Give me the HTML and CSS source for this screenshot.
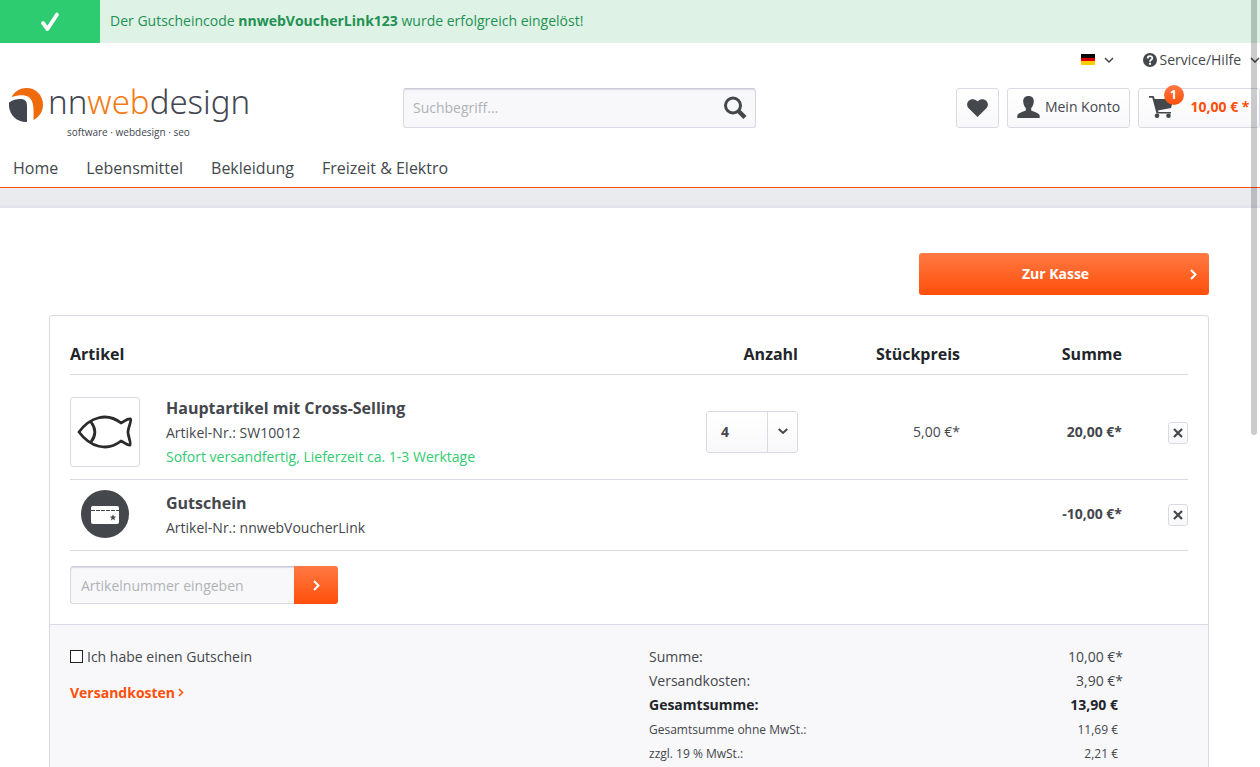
FILE: index.html
```html
<!DOCTYPE html>
<html lang="de">
<head>
<meta charset="utf-8">
<title>Warenkorb | nnwebdesign</title>
<link rel="stylesheet" href="styles.css">
</head>
<body>
<div class="alert" role="status">
  <div class="alert-icon"><svg width="22" height="22" viewBox="0 0 22 22"><path d="M4 12l4.500 6L18 3.500" fill="none" stroke="#fff" stroke-width="3.800" stroke-linecap="round" stroke-linejoin="round"/></svg></div>
  <p class="alert-text">Der Gutscheincode <strong>nnwebVoucherLink123</strong> wurde erfolgreich eingelöst!</p>
</div>
<header class="header">
  <div class="topbar">
    <button class="top-item" type="button" aria-label="Sprache">
      <svg width="14" height="11" viewBox="0 0 14 11"><path fill="#000" d="M0 0h14v4H0z"/><path fill="#d00" d="M0 4h14v3H0z"/><path fill="#fc0" d="M0 7h14v4H0z"/></svg>
      <svg class="chev" width="10" height="6" viewBox="0 0 10 6"><path d="M1 1l4 4 4-4" fill="none" stroke="currentColor" stroke-width="1.500"/></svg>
    </button>
    <button class="top-item service" type="button">
      <svg width="14" height="14" viewBox="0 0 14 14"><circle cx="7" cy="7" r="7" fill="currentColor"/><path d="M4.700 5.400C4.700 2.200 9.400 2.400 9.300 5.200 9.200 6.900 7 6.800 7 8.700" fill="none" stroke="#fff" stroke-width="1.800"/><path d="M6 9.800h2v1.900H6z" fill="#fff"/></svg>
      <span>Service/Hilfe</span>
      <svg class="chev" width="10" height="6" viewBox="0 0 10 6"><path d="M1 1l4 4 4-4" fill="none" stroke="currentColor" stroke-width="1.500"/></svg>
    </button>
  </div>
  <div class="main-row">
    <a class="logo" href="#">
      <svg width="35" height="35" viewBox="0 0 35 35"><path d="M2.500 9C6 3 11.500 0 17.500 0 27 0 34 7.500 34 16.500c0 7-3.600 12.500-9.500 15.500C25.500 12 23 3.500 2.500 9z" fill="#ee6a0a"/><path d="M0 14.500C3 12 7.500 11 11.500 11c4.500 0 6.500 2.500 6.500 7v16C7 34.500-1 26 0 14.500z" fill="#42464f"/></svg>
      <span class="logo-words"><span class="logo-name">nn<span class="logo-accent">web</span>design</span><span class="logo-sub">software · webdesign · seo</span></span>
    </a>
    <form class="search">
      <input class="search-input" type="search" aria-label="Suchbegriff" placeholder="Suchbegriff...">
      <button class="search-btn" type="button" aria-label="Suchen"><svg width="24" height="24" viewBox="0 0 24 24"><circle cx="10" cy="9.500" r="7.500" fill="none" stroke="currentColor" stroke-width="3"/><path d="M15.500 15l6.500 6.500" stroke="currentColor" stroke-width="4.500"/></svg></button>
    </form>
    <div class="shop-actions">
      <button class="btn heart" type="button" aria-label="Merkzettel"><svg width="21" height="18" viewBox="0 0 21 18"><path d="M10.500 18L1.600 9.300C-3 4 4-3.500 10.500 2.300 17-3.500 24 4 19.400 9.300z" fill="currentColor"/></svg></button>
      <button class="btn account" type="button"><svg width="23" height="22" viewBox="0 0 23 22"><path d="M11.500 0C15 0 17 2.200 16.800 5.500c-.2 3.500-1.500 5.500-2.600 6.500v2.500c3 1.500 8.300 2.500 8.500 5.200V22H.3v-2.300C.5 17 5.800 16 8.800 14.500V12C7.700 11 6.400 9 6.200 5.500 6 2.200 8 0 11.500 0z" fill="currentColor"/></svg><span>Mein Konto</span></button>
      <button class="btn cart" type="button">
        <span class="cart-icon"><svg width="26" height="22" viewBox="0 0 26 22"><path d="M0 0h4.500l1.300 3H24.500L22 12 9 14.500l.4 1.500H22v1.500H7.500L3.300 1.800H0z" fill="currentColor"/><circle cx="8" cy="19.700" r="2.300" fill="currentColor"/><circle cx="19.500" cy="19.700" r="2.300" fill="currentColor"/></svg><span class="badge">1</span></span>
        <span class="cart-sum">10,00 € *</span>
      </button>
    </div>
  </div>
  <nav class="nav"><a href="#">Home</a><a href="#">Lebensmittel</a><a href="#">Bekleidung</a><a href="#">Freizeit &amp; Elektro</a></nav>
</header>
<div class="band"></div>
<main class="content">
  <div class="actions"><button class="checkout" type="button"><span>Zur Kasse</span><svg width="7" height="11" viewBox="0 0 7 11"><path d="M1 1l4.500 4.500L1 10" fill="none" stroke="#fff" stroke-width="2"/></svg></button></div>
  <section class="panel">
    <div class="basket">
      <table class="items">
        <colgroup><col><col class="c-qty"><col class="c-price"><col class="c-sum"><col class="c-del"></colgroup>
        <thead><tr><th class="left" scope="col">Artikel</th><th scope="col">Anzahl</th><th scope="col">Stückpreis</th><th scope="col">Summe</th><td></td></tr></thead>
        <tbody>
          <tr class="row-article">
            <td class="left"><div class="product">
              <a class="thumb" href="#" aria-label="Hauptartikel mit Cross-Selling"><svg width="56" height="34" viewBox="0 0 56 34"><g fill="none" stroke="#2b2b2b" stroke-width="2.800" stroke-linejoin="round" stroke-linecap="round"><path d="M2 17C13 2 30-3 44 8c3.500-1.500 6-4.500 9.500-4 1.500 1-2.500 9-2.500 13s3.500 12 2 13c-3.500.5-5.500-2.500-9-4C30 37 13 32 2 17z"/><path d="M14 7c5 6.500 5 13.500 0 20"/></g></svg></a>
              <div><a class="name" href="#">Hauptartikel mit Cross-Selling</a><p class="line">Artikel-Nr.: SW10012</p><p class="line stock">Sofort versandfertig, Lieferzeit ca. 1-3 Werktage</p></div>
            </div></td>
            <td><div class="qty"><select aria-label="Anzahl"><option>4</option></select><svg width="10" height="7" viewBox="0 0 10 7"><path d="M0.700 1l4.300 4L9.300 1" fill="none" stroke="currentColor" stroke-width="2"/></svg></div></td>
            <td class="num">5,00 €*</td><td class="num bold">20,00 €*</td>
            <td><button class="delete" type="button" aria-label="Löschen"><svg width="10" height="10" viewBox="0 0 10 10"><path d="M1 1l8 8m0-8l-8 8" stroke="currentColor" stroke-width="2.200"/></svg></button></td>
          </tr>
          <tr class="row-voucher">
            <td class="left"><div class="product">
              <span class="voucher-icon"><svg width="48" height="48" viewBox="0 0 48 48"><circle cx="24" cy="24" r="24" fill="#44474c"/><rect x="10" y="16" width="28" height="18" rx="2" fill="#fff"/><path d="M10 20.500h28" stroke="#44474c" stroke-dasharray="4 1"/><path d="M32 24.200l.9 2.200 2.300.2-1.800 1.500.6 2.300-2-1.300-2 1.300.6-2.300-1.800-1.500 2.300-.2z" fill="#44474c"/></svg></span>
              <div><span class="name">Gutschein</span><p class="line">Artikel-Nr.: nnwebVoucherLink</p></div>
            </div></td>
            <td></td><td></td><td class="num bold">-10,00 €*</td>
            <td><button class="delete" type="button" aria-label="Löschen"><svg width="10" height="10" viewBox="0 0 10 10"><path d="M1 1l8 8m0-8l-8 8" stroke="currentColor" stroke-width="2.200"/></svg></button></td>
          </tr>
        </tbody>
      </table>
      <form class="add"><input class="add-input" type="text" aria-label="Artikelnummer" placeholder="Artikelnummer eingeben"><button class="add-btn" type="button" aria-label="Hinzufügen"><svg width="7" height="11" viewBox="0 0 7 11"><path d="M1 1l4.500 4.500L1 10" fill="none" stroke="#fff" stroke-width="2"/></svg></button></form>
    </div>
    <div class="footer">
      <div>
        <div class="voucher-check"><input type="checkbox" id="voucher"><label for="voucher">Ich habe einen Gutschein</label></div>
        <a class="shipping" href="#">Versandkosten<svg width="6" height="9" viewBox="0 0 6 9"><path d="M1 1l3.500 3.500L1 8" fill="none" stroke="currentColor" stroke-width="1.500"/></svg></a>
      </div>
      <dl class="totals">
        <div><dt>Summe:</dt><dd class="starred">10,00 €*</dd></div>
        <div><dt>Versandkosten:</dt><dd class="starred">3,90 €*</dd></div>
        <div class="total"><dt>Gesamtsumme:</dt><dd>13,90 €</dd></div>
        <div class="small"><dt>Gesamtsumme ohne MwSt.:</dt><dd>11,69 €</dd></div>
        <div class="small"><dt>zzgl. 19 % MwSt.:</dt><dd>2,21 €</dd></div>
      </dl>
    </div>
  </section>
</main>
<div class="scrollbar" aria-hidden="true"></div>
</body>
</html>
```

FILE: styles.css
```css
* { box-sizing: border-box; }
html { height: 100%; overflow: hidden; }
body { margin: 0; height: 100%; overflow: hidden; position: relative; background: #fff; color: #44474c; font: 14px/24px "Open Sans", sans-serif; }
p, dl, dd { margin: 0; }
a { color: inherit; text-decoration: none; }
button, input, select { font: inherit; color: inherit; margin: 0; }
button { cursor: pointer; padding: 0; border: 0; background: none; }
svg { display: block; flex: none; }

.alert { display: flex; height: 43px; background: #def2e6; color: #239152; }
.alert-icon { width: 100px; display: flex; align-items: center; justify-content: center; background: #2ecc71; }
.alert-text { padding: 9px 10px; }

.header { border-bottom: 1px solid #ff4f0a; }
.topbar { display: flex; justify-content: flex-end; gap: 29px; height: 33px; align-items: center; }
.top-item { display: flex; align-items: center; gap: 9px; white-space: nowrap; }
.service { gap: 3px; }
.service .chev { margin-left: 6px; }

.main-row { display: grid; grid-template-columns: 403px 353px 1fr; align-items: start; padding-top: 12px; height: 72px; }
.logo { display: flex; gap: 4px; padding-left: 9px; color: #42464f; }
.logo-words { display: block; margin-top: -8px; }
.logo-name { display: block; font: 33px/44px "Noto Sans", sans-serif; font-weight: 300; }
.logo-accent { color: #f47a14; }
.logo-sub { display: block; padding-left: 19px; font: 10px/16px "Open Sans", sans-serif; }
.search { display: flex; height: 40px; border: 1px solid #dadae5; border-top-color: #cbcbdb; border-radius: 3px; background: #f8f8fa; box-shadow: inset 0 1px 1px #dadae5; }
.search-input { flex: 1; min-width: 0; border: 0; background: none; padding: 0 9px; outline: 0; }
.search-btn { width: 40px; display: flex; align-items: center; justify-content: center; }
::placeholder { color: #b0b2b8; opacity: 1; }
.shop-actions { display: flex; justify-content: flex-end; gap: 8px; }
.btn { display: flex; align-items: center; justify-content: center; height: 40px; border: 1px solid #dadae5; border-radius: 3px; background: linear-gradient(#fff, #f8f8fa); white-space: nowrap; }
.heart { width: 43px; }
.account { width: 123px; gap: 5px; padding-bottom: 2px; }
.cart { width: 122px; gap: 16px; padding-bottom: 2px; }
.cart-icon { position: relative; }
.badge { position: absolute; left: 15px; top: -11px; width: 20px; height: 20px; border-radius: 50%; background: linear-gradient(#ff7943, #ff4f0a); color: #fff; font-size: 12px; line-height: 20px; font-weight: 700; }
.cart-sum { color: #ff4f0a; font-weight: 700; }

.nav { display: flex; gap: 28px; padding: 8px 13px 7px; font-size: 16px; }
.band { height: 20px; background: linear-gradient(#e9ebef 80%, #e1e1e9); }

.content { padding: 45px 51px 0 49px; }
.actions { display: flex; justify-content: flex-end; }
.checkout { width: 290px; height: 42px; display: flex; align-items: center; padding: 0 12px; border-radius: 3px; background: linear-gradient(#ff7943, #ff4f0a); color: #fff; font-weight: 700; }
.checkout span { flex: 1; padding-right: 10px; }

.panel { margin-top: 20px; border: 1px solid #dadae5; border-radius: 3px 3px 0 0; }
.basket { padding: 20px; }
.items { width: 100%; table-layout: fixed; border-collapse: collapse; }
.c-qty { width: 162px; }
.c-price { width: 162px; }
.c-sum { width: 162px; }
.c-del { width: 66px; }
.items tr { border-bottom: 1px solid #dadae5; }
.items th, .items td { padding: 0; text-align: right; }
.items th { height: 38px; padding-bottom: 2px; font-size: 16px; color: #222529; }
.items .left { text-align: left; }
.row-article { height: 105px; }
.row-article td { padding-top: 10px; }
.row-voucher { height: 71px; }
.row-voucher td { padding-bottom: 2px; }
.product { display: flex; gap: 26px; align-items: center; }
.row-voucher .line { margin-bottom: -2px; }
.thumb { width: 70px; height: 70px; display: flex; align-items: center; justify-content: center; border: 1px solid #dadae5; border-radius: 3px; }
.voucher-icon { width: 70px; display: flex; justify-content: center; }
.name { display: block; font-size: 16px; font-weight: 700; line-height: 26px; }
.stock { color: #2ecc71; }
.bold { font-weight: 700; }
.qty { display: flex; align-items: center; margin-left: auto; width: 92px; height: 42px; border: 1px solid #dadae5; border-radius: 3px; background: linear-gradient(#fff, #f8f8fa); }
.qty select { appearance: none; width: 61px; height: 40px; margin-right: 10px; padding: 0 14px; border: 0; border-right: 1px solid #dadae5; background: none; font-weight: 700; }
.delete { width: 20px; height: 22px; display: inline-flex; align-items: center; justify-content: center; vertical-align: middle; border: 1px solid #dadae5; border-radius: 3px; background: linear-gradient(#fff, #f8f8fa); }
.add { display: flex; width: 268px; height: 38px; margin-top: 15px; }
.add-input { flex: 1; min-width: 0; padding: 2px 10px 0; border: 1px solid #dadae5; border-top-color: #cbcbdb; border-right: 0; border-radius: 3px 0 0 3px; background: #f8f8fa; box-shadow: inset 0 1px 1px #dadae5; outline: 0; }
.add-btn { width: 44px; display: flex; align-items: center; justify-content: center; padding-top: 2px; border-radius: 0 3px 3px 0; background: linear-gradient(#ff7943, #ff4f0a); }

.footer { display: grid; grid-template-columns: 1fr 1fr; column-gap: 40px; padding: 20px; border-top: 1px solid #dadae5; background: #f8f8fa; }
.voucher-check { display: flex; align-items: center; gap: 4px; }
.voucher-check input { appearance: none; width: 13px; height: 13px; border: 1px solid #222; background: #fff; }
.shipping { display: flex; align-items: center; gap: 3px; margin-top: 12px; color: #ff4f0a; font-weight: 700; }
.totals { padding-right: 65px; }
.totals div { display: flex; justify-content: space-between; padding-right: 5px; }
.totals .starred { margin-right: -5px; }
.totals .total { font-weight: 700; color: #222529; }
.totals .small { font-size: 12px; }
.totals .total + .small { margin-top: 1px; }

.scrollbar { position: absolute; top: 0; right: 3px; width: 6px; height: 435px; border-radius: 0 0 3px 3px; background: rgba(0, 0, 0, .2); }
```
